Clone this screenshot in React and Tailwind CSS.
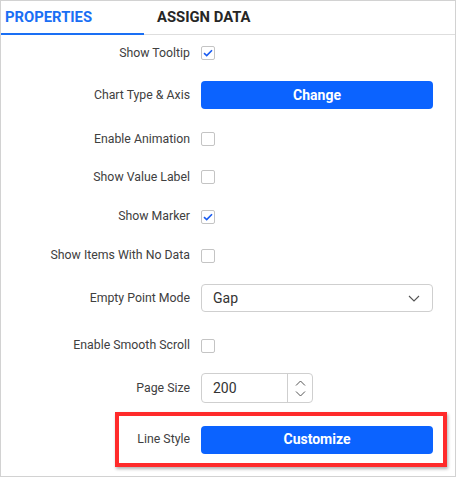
import React from "react";

function Check({ checked }) {
  return (
    <div className="w-[14px] h-[14px] rounded-[2px] border border-[#c4c4c4] bg-white flex items-center justify-center">
      {checked && (
        <svg width="10" height="8" viewBox="0 0 10 8">
          <path d="M1 4.2 L3.7 6.6 L9 1.2" fill="none" stroke="#1a5cf0" strokeWidth="1.6" />
        </svg>
      )}
    </div>
  );
}

function Row({ h, label, children }) {
  return (
    <div className={`flex items-center ${h}`}>
      <div className="w-[189px] text-right text-[12.3px] text-[#404040] pr-0 leading-none">{label}</div>
      <div className="ml-[11px] flex items-center">{children}</div>
    </div>
  );
}

function Btn({ text }) {
  return (
    <div className="w-[232px] h-[28px] rounded-[4px] bg-[#0b63ff] flex items-center justify-center text-white font-bold text-[14px]">
      {text}
    </div>
  );
}

export default function App() {
  return (
    <div className="bg-white w-[456px] h-[479px]" style={{ fontFamily: "Roboto, 'Liberation Sans', sans-serif" }}>
      <div className="w-[456px] h-[477px] border border-[#d2d2d2] flex flex-col">
        <div className="h-[34px] border-b border-[#dedede] flex items-stretch shrink-0">
          <div className="w-[143px] border-b-2 border-[#1a6ff4] pl-[4px] flex items-center text-[14.8px] font-bold text-[#1a6ff4] -mb-px">
            PROPERTIES
          </div>
          <div className="pl-[13px] flex items-center text-[14.8px] font-bold text-[#262626]">ASSIGN DATA</div>
        </div>
        <Row h="h-[36px]" label="Show Tooltip"><Check checked /></Row>
        <Row h="h-[48px]" label="Chart Type & Axis"><Btn text="Change" /></Row>
        <Row h="h-[40px]" label="Enable Animation"><Check /></Row>
        <Row h="h-[36px]" label="Show Value Label"><Check /></Row>
        <Row h="h-[43px]" label="Show Marker"><Check checked /></Row>
        <Row h="h-[35px]" label="Show Items With No Data"><Check /></Row>
        <Row h="h-[50px]" label="Empty Point Mode">
          <div className="w-[232px] h-[28px] rounded-[4px] border border-[#cfcfcf] flex items-center justify-between pl-[11px] pr-[12px] text-[14px] text-[#333]">
            <span>Gap</span>
            <svg width="12" height="7" viewBox="0 0 12 7">
              <path d="M1 1 L6 6 L11 1" fill="none" stroke="#555" strokeWidth="1.1" />
            </svg>
          </div>
        </Row>
        <Row h="h-[45px]" label="Enable Smooth Scroll"><Check /></Row>
        <Row h="h-[40px]" label="Page Size">
          <div className="w-[112px] h-[30px] rounded-[4px] border border-[#cfcfcf] flex items-stretch text-[14px] text-[#333]">
            <div className="flex-1 flex items-center pl-[11px]">200</div>
            <div className="w-[25px] border-l border-[#cfcfcf] flex flex-col items-center justify-center gap-[5px]">
              <svg width="11" height="6" viewBox="0 0 11 6">
                <path d="M1 5.5 L5.5 1 L10 5.5" fill="none" stroke="#555" strokeWidth="1" />
              </svg>
              <svg width="11" height="6" viewBox="0 0 11 6">
                <path d="M1 0.5 L5.5 5 L10 0.5" fill="none" stroke="#555" strokeWidth="1" />
              </svg>
            </div>
          </div>
        </Row>
        <div className="mt-[4px] ml-[114px] w-[332px] h-[55px] border-[4px] border-[#ff2b2b] shadow-[1px_2px_3px_rgba(0,0,0,0.3)] flex items-center">
          <div className="w-[71px] text-right text-[12.3px] text-[#404040] leading-none">Line Style</div>
          <div className="ml-[11px]"><Btn text="Customize" /></div>
        </div>
      </div>
    </div>
  );
}
